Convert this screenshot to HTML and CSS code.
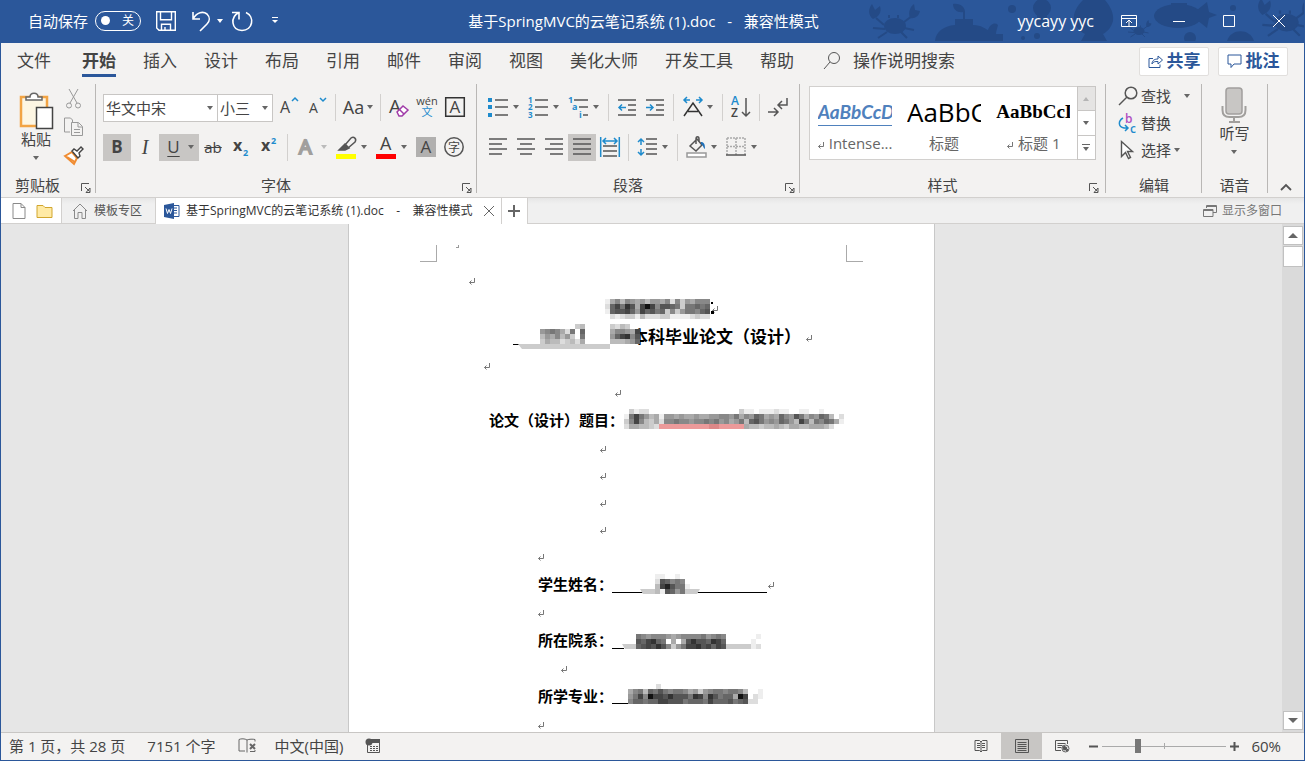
FILE: index.html
```html
<!DOCTYPE html>
<html lang="zh-CN">
<head>
<meta charset="utf-8">
<title>基于SpringMVC的云笔记系统 (1).doc - 兼容性模式</title>
<link rel="stylesheet" href="styles.css">
<script src="mosaic.js" defer></script>
</head>
<body>
<svg class="defs" aria-hidden="true">
  <symbol id="ret" viewBox="0 0 8 8"><path d="M6.5 1v4.500H1.500M3.500 3.500l-2 2 2 2"/></symbol>
  <symbol id="launch" viewBox="0 0 10 10"><path d="M.5 8V.5H8M4 4l4.500 4.500M9 5v4.500H5z"/></symbol>
</svg>
<div class="window">
  <header class="titlebar">
    <svg class="sea" viewBox="0 0 445 41" aria-hidden="true">
      <g id="crab"><ellipse cx="36" cy="26" rx="11" ry="8"/><path d="M25 25l-8-7M26 29l-12-1M28 32l-9 6M45 28l10 2M42 32l6 6M45 22l8-6M30 18v-3M39 18v-3" class="leg"/><path d="M14 19c-5-4-5-10-1-15l3 6 5-4c2 6-1 11-7 13zM51 18c-2-6 0-11 4-14l1 6 5 1c-1 5-5 8-10 7z"/></g>
      <path d="M76 41c1-9 8-15 20-16V19h8V12c-5 1-10-2-10-8 7-1 13 3 12 10v5h8v6c9 0 12 4 15 5 2-6 7-8 10-5-1 4-2 6-2 9h7v7z"/>
      <circle cx="153" cy="9" r="4"/><circle cx="183" cy="8" r="9"/><path d="M178 15h10v12h-10z"/><circle cx="164" cy="38" r="2"/><circle cx="178" cy="36" r="3"/>
      <path d="M224 0h22c6 7 9 14 8 21-2 7-6 11-10 13l4 7h-26l4-7c-6-3-10-8-11-14-1-7 3-14 9-20z"/>
      <g transform="translate(262 18) scale(.5)"><use href="#crab"/></g>
      <ellipse cx="319" cy="16" rx="24" ry="12"/><path d="M312 3h16v7h-16zM338 10l10-8 2 10 8 3-8 3-2 10-10-8z"/><circle cx="374" cy="8" r="3"/><circle cx="331" cy="38" r="6"/><path d="M368 41c4-13 23-13 27 0z"/>
      <g transform="translate(388 -6) scale(1.100)"><use href="#crab"/></g>
    </svg>
    <div class="quick">
      <label class="autosave">自动保存<input type="checkbox" class="sr"><span class="toggle"><i></i>关</span></label>
      <button aria-label="保存"><svg width="20" height="20"><path d="M.7.700h18.600v18.600H3L.7 17zM4.500.700v8h11v-8M5.500 19.300v-6h9v6M9 19v-3" stroke-width="1.400"/></svg></button>
      <button class="undo" aria-label="撤销"><svg width="20" height="22"><path d="M2 2v7h7M2 9C6 2 12 1 16 4c3 3 3 7 0 10l-7 7" stroke-width="1.600"/></svg><b class="caret"></b></button>
      <button aria-label="恢复"><svg width="22" height="22"><path d="M1 2.500h7v7M8 2.500C-1 7 0 20 11 20.500c11 0 13-14 4-18" stroke-width="1.600"/></svg></button>
      <button class="more" aria-label="自定义快速访问工具栏"><svg width="6" height="7"><path d="M0 .5h6"/><path class="solid" d="M0 3h6L3 6z"/></svg></button>
    </div>
    <h1>基于SpringMVC的云笔记系统 (1).doc&nbsp;&nbsp; -&nbsp;&nbsp; 兼容性模式</h1>
    <div class="controls">
      <span class="user">yycayy yyc</span>
      <button aria-label="功能区显示选项"><svg width="16" height="14"><path d="M.5 1.500h15v11H.5zM.5 4.500h15M8 12V6.500M5 9l3-3 3 3"/></svg></button>
      <button aria-label="最小化"><svg width="12" height="12"><path d="M0 6.500h12"/></svg></button>
      <button aria-label="最大化"><svg width="12" height="12"><path d="M.5.500h11v11H.5z"/></svg></button>
      <button aria-label="关闭"><svg width="12" height="12"><path d="M0 0l12 12M12 0L0 12"/></svg></button>
    </div>
  </header>

  <nav class="tabs">
    <button class="file">文件</button><button class="active">开始</button><button>插入</button><button>设计</button><button>布局</button><button>引用</button><button>邮件</button><button>审阅</button><button>视图</button><button>美化大师</button><button>开发工具</button><button>帮助</button>
    <button class="tell"><svg width="18" height="20"><circle cx="11" cy="7" r="5.500"/><path d="M7 11l-6 7"/></svg>操作说明搜索</button>
    <div class="actions">
      <button><svg width="15" height="14"><path d="M5 4.500H1v9h11v-3M4 10c0-4 3-5 6-5V2l4.500 4L10 10V7.500c-3 0-5 0-6 2.500z"/></svg>共享</button>
      <button><svg width="15" height="14"><path d="M1 1h13v9H7l-3 3.500V10H1z"/></svg>批注</button>
    </div>
  </nav>

  <section class="ribbon">
    <div class="group clip">
      <div class="clipbody">
        <button class="big" aria-label="粘贴">
          <svg width="36" height="38"><path d="M3 5h26v29H3z" fill="#fdf6e3" stroke="#f2a444" stroke-width="2.500"/><path d="M8 8V5h4c0-5 8-5 8 0h4v3z" fill="#fff" stroke="#666" stroke-width="1.500"/><path d="M18.500 15.500h16v21h-16z" fill="#fff" stroke="#444" stroke-width="1.500"/></svg>
          粘贴<b class="caret"></b></button>
        <div class="mini">
          <button aria-label="剪切"><svg width="20" height="22" class="dim"><path d="M5 1l8 14M14 1L6 15"/><circle cx="5" cy="17.500" r="2.500"/><circle cx="14" cy="17.500" r="2.500"/></svg></button>
          <button aria-label="复制"><svg width="22" height="20" class="dim"><path d="M7 15H1.500V1h6l2 2v2M8.500 5.500h7l4 4v9h-11zM15 6v4h4M11 12.500h6M11 15.500h6"/></svg></button>
          <button aria-label="格式刷"><svg width="22" height="20"><path d="M2 11l7-4 5 6-3 6z" fill="#fff" stroke="#f08c32" stroke-width="2"/><path d="M4 12l8 5" stroke="#f08c32" stroke-width="2"/><path d="M9 6l2-2 3 2 4-4 2 2-4 4 1 3-2 2z" fill="#fff" stroke="#444" stroke-width="1.400"/></svg></button>
        </div>
      </div>
      <footer><span>剪贴板</span><button class="launch" aria-label="剪贴板选项"><svg><use href="#launch"/></svg></button></footer>
    </div>

    <div class="group">
      <div class="rows">
        <div class="row">
          <span class="combo family"><select aria-label="字体"><option>华文中宋</option></select><b class="caret"></b></span><span class="combo size"><select aria-label="字号"><option>小三</option></select><b class="caret"></b></span>
          <span class="gap"></span>
          <button class="t" aria-label="增大字号"><svg width="20" height="20"><text x="1" y="16" font-size="16">A</text><path class="bl" d="M13 4l3-3 3 3"/></svg></button>
          <button class="t" aria-label="减小字号"><svg width="20" height="20"><text x="2" y="16" font-size="14">A</text><path class="bl" d="M13 1l3 3 3-3"/></svg></button>
          <hr>
          <button class="t case" aria-label="更改大小写"><span class="aa">Aa</span><b class="caret"></b></button>
          <hr>
          <button class="t" aria-label="清除所有格式"><svg width="22" height="22"><text x="1" y="17" font-size="19">A</text><path d="M9 16l6-6 5 4-6 6h-3z" fill="#fff" stroke="#a03ba8" stroke-width="1.500"/><path d="M11 13l5 5" stroke="#a03ba8"/></svg></button>
          <button class="t pinyin" aria-label="拼音指南"><span>wén</span><em>文</em></button>
          <button class="t" aria-label="字符边框"><svg width="20" height="20"><path d="M.7.700h18.600v18.600H.7z" stroke="#333"/><text x="4.500" y="16" font-size="17">A</text></svg></button>
        </div>
        <div class="row">
          <button class="t on bold" aria-label="加粗">B</button>
          <button class="t ital" aria-label="倾斜">I</button>
          <button class="t split on und" aria-label="下划线"><span>U</span><b class="caret"></b></button>
          <button class="t strike" aria-label="删除线">ab</button>
          <button class="t" aria-label="下标"><svg width="20" height="20"><text x="2" y="14" font-size="16" font-weight="700">x</text><text x="12" y="19" font-size="9" font-weight="700" class="blt">2</text></svg></button>
          <button class="t" aria-label="上标"><svg width="20" height="20"><text x="2" y="14" font-size="16" font-weight="700">x</text><text x="12" y="7" font-size="9" font-weight="700" class="blt">2</text></svg></button>
          <hr>
          <button class="t split faint" aria-label="文本效果"><svg width="22" height="22"><text x="3" y="18" font-size="20" class="outline">A</text></svg><b class="caret"></b></button>
          <button class="t split" aria-label="突出显示"><svg width="22" height="22"><path d="M0 18h20v5H0z" fill="#ff0" stroke="none"/><path d="M9 9l6-7c3-2 6 1 4 4l-7 6z"/><path class="solid" d="M9 8l4 4-4 2H3z"/></svg><b class="caret"></b></button>
          <button class="t split" aria-label="字体颜色"><svg width="22" height="22"><path d="M0 18h20v5H0z" fill="red" stroke="none"/><text x="4" y="14" font-size="18">A</text></svg><b class="caret"></b></button>
          <button class="t" aria-label="字符底纹"><svg width="20" height="20"><path d="M0 0h20v20H0z" fill="#b1b0af" stroke="none"/><text x="4.500" y="16" font-size="17">A</text></svg></button>
          <button class="t" aria-label="带圈字符"><svg width="20" height="20"><circle cx="10" cy="10" r="9.200"/><text x="4" y="15" font-size="12">字</text></svg></button>
        </div>
      </div>
      <footer><span>字体</span><button class="launch" aria-label="字体选项"><svg><use href="#launch"/></svg></button></footer>
    </div>

    <div class="group">
      <div class="rows">
        <div class="row">
          <button class="t split" aria-label="项目符号"><svg width="20" height="20"><path d="M0 1h4v4H0zM0 8h4v4H0zM0 16h4v4H0z" fill="#1e8bcd" stroke="none"/><path d="M7 3h13M7 10h13M7 18h13"/></svg><b class="caret"></b></button>
          <button class="t split" aria-label="编号"><svg width="20" height="22"><g class="blt" font-size="8" font-weight="700"><text x="0" y="7">1</text><text x="0" y="14">2</text><text x="0" y="22">3</text></g><path d="M7 4h13M7 11h13M7 19h13"/></svg><b class="caret"></b></button>
          <button class="t split" aria-label="多级列表"><svg width="20" height="22"><g class="blt" font-size="9" font-weight="700"><text x="0" y="7">1</text><text x="4" y="14">a</text><text x="11" y="22">i</text></g><path d="M6 4h14M11 11h9M15 19h5"/></svg><b class="caret"></b></button>
          <hr>
          <button class="t" aria-label="减少缩进量"><svg width="20" height="20"><path d="M1 3h18M11 8h8M11 13h8M1 18h18"/><path class="bl" d="M9 10.500H2M5 7.500l-3 3 3 3"/></svg></button>
          <button class="t" aria-label="增加缩进量"><svg width="20" height="20"><path d="M1 3h18M11 8h8M11 13h8M1 18h18"/><path class="bl" d="M1 10.500h7M5 7.500l3 3-3 3"/></svg></button>
          <hr>
          <button class="t split" aria-label="中文版式"><svg width="22" height="22"><path d="M2 20L11 7l9 13M6 15.500h10" stroke="#333"/><path class="bl" d="M8 4H2M5 1L2 4l3 3M14 4h6M17 1l3 3-3 3"/></svg><b class="caret"></b></button>
          <hr>
          <button class="t" aria-label="排序"><svg width="22" height="22"><text x="1" y="9" font-size="12" font-weight="600" class="blt">A</text><text x="1" y="21" font-size="12" font-weight="600">Z</text><path d="M16 2v18M12 16l4 4 4-4"/></svg></button>
          <hr>
          <button class="t" aria-label="显示编辑标记"><svg width="22" height="22"><path d="M20 2v7h-8M15 5l-4 4 4 4M1 16h9M7 12l4 4-4 4"/></svg></button>
        </div>
        <div class="row">
          <button class="t" aria-label="左对齐"><svg width="20" height="20"><path d="M1 2h18M1 7h13M1 12h18M1 17h13"/></svg></button>
          <button class="t" aria-label="居中"><svg width="20" height="20"><path d="M1 2h18M4 7h12M1 12h18M4 17h12"/></svg></button>
          <button class="t" aria-label="右对齐"><svg width="20" height="20"><path d="M1 2h18M6 7h13M1 12h18M6 17h13"/></svg></button>
          <button class="t on" aria-label="两端对齐"><svg width="20" height="20"><path d="M1 2h18M1 7h18M1 12h18M1 17h18"/></svg></button>
          <button class="t" aria-label="分散对齐"><svg width="20" height="20"><path class="bl" d="M.7 0v20M19.300 0v20M3 4h14M6 1L3 4l3 3M14 1l3 3-3 3"/><path d="M3 9h14M3 14h14M3 19h14"/></svg></button>
          <hr>
          <button class="t split" aria-label="行和段落间距"><svg width="20" height="20"><path class="bl" d="M4 2v6M1 5l3-3 3 3M4 12v6M1 15l3 3 3-3"/><path d="M9 2h11M9 7h11M9 12h11M9 17h11"/></svg><b class="caret"></b></button>
          <hr>
          <button class="t split" aria-label="底纹"><svg width="22" height="22"><path d="M1 17h19v4H1z" fill="#fff" stroke="#999"/><path d="M4 10l7-7 5 6-6 6zM10 8V3c0-3 3-3 3 0v3"/><path d="M15 6c3 0 4 2 4 7-2-1-1-3-4-5z" fill="#1e6fb8" stroke="none"/></svg><b class="caret"></b></button>
          <button class="t split" aria-label="边框"><svg width="20" height="20"><path d="M1 1h18v17M1 1v17M10 1v17M1 9.500h18" stroke="#aaa" stroke-dasharray="2 1"/><path d="M0 18h20"/></svg><b class="caret"></b></button>
        </div>
      </div>
      <footer><span>段落</span><button class="launch" aria-label="段落选项"><svg><use href="#launch"/></svg></button></footer>
    </div>

    <div class="group styles">
      <div class="gallery">
        <button class="style"><span class="sample intense">AaBbCcDd</span><span><svg class="ret"><use href="#ret"/></svg> Intense...</span></button>
        <button class="style"><span class="sample title">AaBbCc</span><span>标题</span></button>
        <button class="style"><span class="sample h1">AaBbCcDd</span><span><svg class="ret"><use href="#ret"/></svg> 标题 1</span></button>
        <div class="scroller"><button disabled aria-label="上一行"><b class="caret up"></b></button><button aria-label="下一行"><b class="caret"></b></button><button aria-label="其他"><i></i><b class="caret"></b></button></div>
      </div>
      <footer><span>样式</span><button class="launch" aria-label="样式选项"><svg><use href="#launch"/></svg></button></footer>
    </div>

    <div class="group edit">
      <div class="list">
        <button><svg width="20" height="20"><circle cx="13" cy="7" r="5.800" stroke-width="1.500"/><path d="M9 11l-8 8" stroke-width="1.500"/></svg>查找<b class="caret far"></b></button>
        <button><svg width="20" height="20"><text x="7" y="10" font-size="12" font-weight="600" class="purple">b</text><text x="12" y="20" font-size="12" font-weight="600" class="blt">c</text><path class="bl" d="M5 5c-5 3-5 9 1 10h4M7 12l3 3-3 3"/></svg>替换</button>
        <button><svg width="20" height="20"><path d="M3.500 1.500v15l4-4 3 6 2-1-3-6h5z" stroke-width="1.400" fill="#fff"/></svg>选择<b class="caret"></b></button>
      </div>
      <footer><span>编辑</span></footer>
    </div>

    <div class="group voice">
      <button class="big"><svg width="26" height="38"><rect x="5" y="2" width="16" height="26" rx="3" fill="#c8c6c4" stroke="#a19f9d" stroke-width="1.500"/><path d="M1.500 20v4c0 5 3 7 7 7h9c4 0 7-2 7-7v-4M13 31v5M8 36h11" stroke="#a19f9d" stroke-width="2"/></svg>听写<b class="caret"></b></button>
      <footer><span>语音</span></footer>
    </div>
    <button class="collapse" aria-label="折叠功能区"><svg width="12" height="8"><path d="M1 7l5-5 5 5" stroke-width="1.800"/></svg></button>
  </section>

  <nav class="doctabs">
    <div class="cell white icons">
      <button aria-label="新建"><svg width="14" height="16"><path d="M1 .500h8l4 4v11H1zM9 .500v4h4" fill="#fff" stroke="#8a8a8a"/></svg></button>
      <button aria-label="打开"><svg width="17" height="14"><path d="M1 1.500h6l2 2h7v10H1z" fill="#ffeaa5" stroke="#d1a62e"/></svg></button>
    </div>
    <button class="cell home"><svg width="16" height="16"><path d="M1 8l7-7 7 7M2.500 7v8.500h3.500v-6h4v6h3.500V7" stroke="#8a8a8a"/></svg>模板专区</button>
    <div class="cell white current">
      <svg width="16" height="16"><path d="M9 2.500h6v11H9M10 5h3M10 7.500h3M10 10h3" stroke="#2b579a"/><path d="M0 2l10-2v16L0 14z" fill="#2b579a" stroke="none"/><path d="M2 5.500l1.500 5L5 6.500l1.500 4 1.500-5" stroke="#fff"/></svg>
      <span>基于SpringMVC的云笔记系统 (1).doc&nbsp;&nbsp;&nbsp; -&nbsp;&nbsp;&nbsp; 兼容性模式</span>
      <button aria-label="关闭标签"><svg width="12" height="12"><path d="M1 1l10 10M11 1L1 11" stroke="#666"/></svg></button>
    </div>
    <button class="cell white plus" aria-label="新建标签"><svg width="12" height="12"><path d="M6 0v12M0 6h12" stroke="#666" stroke-width="2"/></svg></button>
    <button class="multi"><svg width="14" height="12"><path d="M3.500 3V.500h10v7H10M.5 4.500H10v7H.5zM.5 5.500H10M3.500 1.500h10" stroke="#777"/></svg>显示多窗口</button>
  </nav>

  <main class="workspace">
    <div class="canvas">
      <article class="page">
        <div class="margins"><i class="corner"></i><span class="dot"></span><i class="corner right"></i></div>
        <p class="b i119"><svg class="ret"><use href="#ret"/></svg></p>
        <p class="t i256"><svg class="mosaic" width="106" height="29" data-x="0" data-y="5" data-rows="ea8b89a9b99a8d8c9a888 d64735a41485567c77676 e65546946576c8c977865 fdedccebdddcceeeedcdd"><path d="M106 8h2v2h-2zM106 17h3v3h-3z" fill="#000"/></svg><svg class="ret"><use href="#ret"/></svg></p>
        <p class="t i164 heading"><svg class="mosaic" width="118" height="29" data-x="27" data-y="1" data-rows="fffffffcbfffffcdbcff 9878ad7f6fffffa889a4 b9a8b9cf7fffff964385 cabbdcbdafffffbbba96"><path d="M0 21h6v1H0z" fill="#000"/><path d="M5 21h92v5H9z" fill="#ccc"/></svg><span>本科毕业论文（设计）</span><svg class="ret"><use href="#ret"/></svg></p>
        <p class="b i134"><svg class="ret"><use href="#ret"/></svg></p>
        <p class="b i265"><svg class="ret"><use href="#ret"/></svg></p>
        <p class="t i140 label"><span>论文（设计）题目：</span><svg class="mosaic" width="218" height="29" data-x="0" data-y="3" data-rows="fceddffffffffffffffffffceefeeedeeffeeffeffff e7479bae99a9aa9aa998897a8967a9a68957a8967bfd c848bcad8878898878798a97b657989679b47b7867ae daabbcdppppppppppqqpppppabbcbbabcaabbaaabdff"></svg></p>
        <p class="b i250"><svg class="ret"><use href="#ret"/></svg></p>
        <p class="b i250"><svg class="ret"><use href="#ret"/></svg></p>
        <p class="b i250"><svg class="ret"><use href="#ret"/></svg></p>
        <p class="b i250"><svg class="ret"><use href="#ret"/></svg></p>
        <p class="b i188"><svg class="ret"><use href="#ret"/></svg></p>
        <p class="t i189 label"><span>学生姓名：</span><svg class="mosaic" width="154" height="29" data-x="42" data-y="4" data-rows="eeffeff d56878f b42577e be5697c"><path d="M-1 22h155v1H-1z" fill="#000"/><path d="M27 19h60l-3 5H30z" fill="#ccc"/></svg><svg class="ret"><use href="#ret"/></svg></p>
        <p class="b i188"><svg class="ret"><use href="#ret"/></svg></p>
        <p class="t i189 label"><span>所在院系：</span><svg class="mosaic" width="150" height="29" data-x="23" data-y="8" data-rows="7898889a9888879878ffffffe 564367fafa53556346fffffef 6545358c9744354645ccccced"><path d="M-1 22h12v1H-1z" fill="#000"/><path d="M9 18h128v5H12z" fill="#ccc"/></svg></p>
        <p class="b i211"><svg class="ret"><use href="#ret"/></svg></p>
        <p class="t i189 label"><span>所学专业：</span><svg class="mosaic" width="150" height="29" data-x="15" data-y="7" data-rows="a87b67578778a9c98778778bffe 974814453555734835766a14fde 866766445557666746665765ddf"><path d="M-1 21h17v1H-1z" fill="#000"/><path d="M43 2h5v5h-5z" fill="#ddd"/></svg></p>
        <p class="b i188"><svg class="ret"><use href="#ret"/></svg></p>
      </article>
    </div>
    <div class="vscroll"><button aria-label="向上滚动"><b class="caret up"></b></button><div class="thumb"></div><button class="down" aria-label="向下滚动"><b class="caret"></b></button></div>
  </main>

  <footer class="status">
    <button class="pages">第 1 页，共 28 页</button>
    <button class="words">7151 个字</button>
    <button aria-label="校对"><svg width="19" height="16"><path d="M9 14.500V2C7 .500 3 .500 1 1.500V13h6M9 2c2-1 6-1 8-.500v2M17 12v1.500h-5" stroke="#666"/><path d="M12 6l5 5M17 6l-5 5" stroke="#666" stroke-width="2"/></svg></button>
    <button class="lang">中文(中国)</button>
    <button aria-label="宏录制"><svg width="16" height="16"><path d="M2.500 6v8.500h12V2H6" stroke="#555"/><path d="M6 1h9v4H6z" fill="#555" stroke="none"/><circle cx="4" cy="4" r="3.500" fill="#555" stroke="none"/><path d="M5 8.500h8M5 10.500h8M5 12.500h8" stroke="#555" stroke-dasharray="2 1"/></svg></button>
    <div class="views">
      <button aria-label="阅读视图"><svg width="14" height="14"><path d="M7 2v11M1 1.500h4.500L7 3l1.500-1.500H13v10H8.500L7 13l-1.500-1.500H1zM3 4.500h3M3 6.500h3M3 8.500h3M8 4.500h3M8 6.500h3M8 8.500h3"/></svg></button>
      <button class="on" aria-label="页面视图"><svg width="14" height="14"><path d="M.5.500h13v13H.5zM2.500 3.500h9M2.500 5.500h9M2.500 7.500h9M2.500 9.500h9M2.500 11.500h9"/></svg></button>
      <button aria-label="Web 版式视图"><svg width="15" height="14"><path d="M6 11.500H.5v-10h12V5M2.500 4.500h8M2.500 6.500h5M2.500 8.500h4"/><circle cx="10.500" cy="9.500" r="3.500" stroke="#666" fill="#ddd"/><path d="M9 7l3 2-2 2-2-1zM12 10l1 1-2 1z" fill="#555"/></svg></button>
    </div>
    <div class="zoom"><button aria-label="缩小"><svg width="9" height="9"><path d="M0 4.500h9" stroke-width="2"/></svg></button><span class="slide"><input type="range" min="0" max="100" value="28" aria-label="显示比例"></span><button aria-label="放大"><svg width="9" height="9"><path d="M0 4.500h9M4.500 0v9" stroke-width="2"/></svg></button><button class="pct">60%</button></div>
  </footer>
</div>
</body>
</html>
```

FILE: mosaic.js
```js
// Fills each .mosaic with 5px cells; a hex digit is a grey level, p and q are the two pinks.
const NS = "http://www.w3.org/2000/svg";
document.querySelectorAll(".mosaic").forEach((svg) => {
  const x0 = Number(svg.dataset.x);
  const y0 = Number(svg.dataset.y);
  svg.dataset.rows.split(" ").forEach((row, r) => {
    [...row].forEach((c, i) => {
      if (c === "f") return;
      const rect = document.createElementNS(NS, "rect");
      rect.setAttribute("x", x0 + i * 5);
      rect.setAttribute("y", y0 + r * 5);
      rect.setAttribute("width", 5);
      rect.setAttribute("height", 5);
      rect.setAttribute("fill", c === "p" ? "#ec9a9a" : c === "q" ? "#d88" : "#" + c + c + c);
      svg.appendChild(rect);
    });
  });
});
```

FILE: styles.css
```css
* { box-sizing: border-box; }
body { margin: 0; font: 15px/20px "Open Sans", "Noto Sans CJK SC", sans-serif; color: #444; }
button, select, input { font: inherit; color: inherit; margin: 0; padding: 0; border: 0; background: none; }
button { display: flex; align-items: center; justify-content: center; white-space: nowrap; }
p, h1 { margin: 0; }
svg { flex: none; fill: none; stroke: #555; overflow: visible; }
svg text { fill: #444; stroke: none; }
svg .blt, svg .blt text { fill: #1e8bcd; }
svg .purple { fill: #b04fc0; }
svg .bl { stroke: #1e8bcd; stroke-width: 1.5; }
svg .solid { fill: #555; }
.row svg { stroke-width: 1.5; }
.defs { position: absolute; width: 0; height: 0; }
.sr { position: absolute; opacity: 0; }
.caret { width: 0; height: 0; flex: none; border: 3px solid transparent; border-top: 4px solid #666; border-bottom: 0; }
.caret.up { border-top: 0; border-bottom: 4px solid #666; }
.window { height: 100vh; min-height: 400px; display: flex; flex-direction: column; border: 1px solid #2b579a; border-top: 0; background: #f3f2f1; overflow: hidden; }

.titlebar { position: relative; flex: none; height: 43px; display: flex; align-items: center; background: #2b579a; color: #fff; padding-bottom: 2px; }
.titlebar svg { stroke: #fff; }
.titlebar .caret { border-top-color: #fff; }
.titlebar svg .solid { fill: #fff; stroke: none; }
.titlebar .sea { position: absolute; right: 0; top: 0; width: 445px; height: 41px; overflow: hidden; fill: #244a86; stroke: none; }
.sea .leg { stroke: #244a86; stroke-width: 2; fill: none; }
.quick, .controls { position: relative; flex: 1; display: flex; align-items: center; }
.quick { padding-left: 27px; gap: 15px; }
.autosave { display: flex; align-items: center; gap: 7px; }
.toggle { width: 46px; height: 20px; border: 1px solid #fff; border-radius: 10px; display: flex; align-items: center; justify-content: space-between; padding: 0 6px 0 5px; font-size: 12px; }
.toggle i { width: 9px; height: 9px; border-radius: 50%; background: #fff; }
.undo { gap: 6px; }
.quick .undo { margin-right: -7px; }
.more { margin-left: 4px; }
.titlebar h1 { font-size: 15px; font-weight: 400; white-space: nowrap; }
.controls { justify-content: flex-end; padding-left: 45px; }
.controls button { width: 50px; height: 41px; }
.user { font-size: 16px; margin-right: 10px; }

.tabs { flex: none; height: 37px; display: flex; gap: 1px; padding: 0 16px 0 3px; font-size: 17px; }
.tabs > button { position: relative; padding: 0 13px; height: 36px; }
.tabs > .file { margin-right: 4px; }
.tabs > .active { font-weight: 700; }
.tabs > .active::after { content: ""; position: absolute; left: 13px; right: 13px; bottom: 2px; height: 3px; background: #2b579a; }
.tabs > .tell { gap: 12px; margin-left: 2px; }
.actions { margin-left: auto; display: flex; gap: 9px; padding-top: 4px; }
.actions button { height: 29px; width: 70px; gap: 4px; background: #fff; border: 1px solid #e1dfdd; border-radius: 2px; color: #2b579a; font-weight: 700; padding-bottom: 2px; }
.actions svg { stroke: #2b579a; }

.ribbon { flex: none; height: 118px; display: flex; border-bottom: 1px solid #d2d0ce; padding-top: 4px; }
.group { position: relative; display: flex; flex-direction: column; justify-content: space-between; padding: 0 8px 0 7px; height: 112px; }
.group::after { content: ""; position: absolute; right: 0; top: 0; height: 109px; width: 1px; background: #b9b7b5; }
.group footer { display: flex; justify-content: center; height: 22px; line-height: 22px; position: relative; padding-right: 20px; }
.launch { position: absolute; right: -4px; bottom: 2px; width: 12px; height: 12px; }
.launch svg { width: 10px; height: 10px; }
.clip { width: 95px; }
.group.clip footer { justify-content: flex-start; padding: 0 0 0 7px; }
.clipbody { display: flex; justify-content: space-between; }
.big { flex-direction: column; line-height: 18px; padding: 2px 0 0 10px; }
.big .caret { margin-top: 8px; }
.mini { display: flex; flex-direction: column; gap: 6px; padding-top: 4px; }
.mini button { height: 22px; width: 28px; }
svg.dim { stroke: #999; }
.rows { padding-top: 10px; display: flex; flex-direction: column; gap: 13px; }
.row { display: flex; height: 27px; }
.row hr { width: 1px; height: 27px; margin: 0 4px; border: 0; background: #d2d0ce; }
.t { width: 28px; height: 27px; flex: none; padding-bottom: 1px; }
.split { width: 40px; }
.split > :first-child { width: 22px; margin: 0 3px; text-align: center; }
.split .caret { margin-right: 5px; }
.on { background: #c8c6c4; }
.combo { position: relative; display: flex; align-items: center; border: 1px solid #c8c6c4; background: #fff; height: 28px; }
.combo select { appearance: none; width: 100%; height: 26px; padding-left: 2px; }
.combo .caret { position: absolute; right: 4px; pointer-events: none; }
.family { width: 115px; }
.size { width: 56px; margin-left: -1px; }
.gap { width: 2px; }
.case { width: 36px; gap: 3px; }
.aa { font-size: 18px; }
.pinyin { flex-direction: column; font-size: 11px; line-height: 10px; }
.pinyin em { font-style: normal; color: #1e8bcd; line-height: 12px; }
.bold { font-weight: 700; font-size: 17px; }
.ital { font: italic 20px "Liberation Serif", serif; }
.und { font-size: 17px; }
.und span { text-decoration: underline; text-underline-offset: 3px; }
.strike { text-decoration: line-through; }
.faint .caret { border-top-color: #bbb; }
svg text.outline { fill: #ddd; stroke: #a19f9d; stroke-width: 2px; }

.styles { flex: 1; padding: 2px 10px 0 9px; }
.gallery { display: flex; height: 74px; border: 1px solid #d2d0ce; background: #fff; }
.style { flex: 1; flex-direction: column; gap: 4px; color: #666; padding-top: 2px; min-width: 0; }
.sample { width: 74px; height: 34px; line-height: 34px; overflow: hidden; color: #000; text-align: left; }
.intense { font: italic 700 19px/26px Lato, sans-serif; color: #4f81bd; border-bottom: 1px solid #4f81bd; height: 27px; margin: 4px 0 3px; }
.title { font-size: 26px; }
.h1 { font: 700 19px/34px "Liberation Serif", serif; }
.scroller { width: 19px; margin: -1px; display: flex; flex-direction: column; border: 1px solid #c8c6c4; }
.scroller button { flex: 1; flex-direction: column; gap: 2px; border-bottom: 1px solid #c8c6c4; }
.scroller button:disabled { background: #e5e4e3; }
.scroller button:last-child { border-bottom: 0; }
.scroller :disabled .caret { border-bottom-color: #b5b5b5; }
.scroller i { width: 8px; height: 1px; background: #666; }
.ret { width: 8px; height: 8px; stroke: #777; }
.styles + .edit { width: 96px; padding-left: 8px; }
.list { display: flex; flex-direction: column; align-items: flex-start; padding-left: 4px; }
.list button { height: 27px; gap: 3px; padding-bottom: 3px; }
.list .far { margin-left: 10px; }
.group.edit footer, .group.voice footer { padding: 0; }
.voice { width: 66px; align-items: center; }
.voice .big { padding-left: 0; }
.collapse { width: 36px; align-self: flex-end; height: 20px; }

.doctabs { flex: none; height: 26px; display: flex; background: linear-gradient(#e6e6e6, #f0f0f0 6px); border-bottom: 1px solid #d2d0ce; font-size: 12px; color: #555; }
.cell { display: flex; align-items: center; height: 25px; border-right: 1px solid #d2d0ce; padding: 0 8px; gap: 6px; white-space: nowrap; }
.white { background: #fff; }
.current, .plus { height: 26px; }
.current { color: #333; padding-right: 6px; }
.icons { gap: 10px; padding: 0 8px 0 11px; }
.home { padding: 0 13px 0 10px; }
.current button { margin-left: 4px; }
.plus { width: 26px; padding: 0; }
.multi { margin-left: auto; margin-right: 22px; gap: 5px; color: #777; }

.workspace { flex: 1; min-height: 0; display: flex; background: #e6e6e6; }
.canvas { flex: 1; display: flex; justify-content: center; overflow: hidden; }
.page { width: 587px; background: #fff; border: 1px solid #c8c8c8; border-width: 0 1px; overflow: hidden; color: #000; }
.margins { height: 43px; padding: 21px 71px 0; display: flex; }
.corner { width: 17px; height: 17px; border: solid #aaa; border-width: 0 1px 1px 0; }
.corner.right { margin-left: auto; border-width: 0 0 1px 1px; }
.dot { width: 3px; height: 3px; border: solid #999; border-width: 0 1px 1px 0; margin-left: 19px; }
.page p { display: flex; align-items: center; font-weight: 700; font-family: "Liberation Serif", "Noto Sans CJK SC", serif; white-space: nowrap; }
.b { height: 27px; }
.t.label, .t.heading, .t.i256 { width: auto; height: 29px; padding-bottom: 0; }
.heading { font-size: 17px; }
.heading .ret { margin-left: 4px; }
.mosaic { position: relative; stroke: none; }
.i119 { padding-left: 119px; }
.i134 { padding-left: 134px; }
.i140 { padding-left: 140px; }
.i164 { padding-left: 164px; }
.i188 { padding-left: 188px; }
.i189 { padding-left: 189px; }
.i211 { padding-left: 211px; }
.i250 { padding-left: 250px; }
.i256 { padding-left: 256px; }
.i265 { padding-left: 265px; }
.vscroll { width: 22px; background: #dadada; display: flex; flex-direction: column; padding: 2px 1px; gap: 1px; }
.vscroll button, .thumb { height: 19px; background: #fff; border: 1px solid #c1c1c1; }
.thumb { height: 21px; }
.vscroll .down { margin-top: auto; }
.vscroll .caret { border-width: 5px; border-bottom-width: 0; }
.vscroll .caret.up { border-top-width: 0; border-bottom-width: 5px; }

.status { flex: none; height: 28px; display: flex; align-items: stretch; border-top: 1px solid #c8c6c4; padding: 0 23px 1px 8px; }
.status button { height: 26px; }
.words { margin: 0 22px; }
.status .lang { margin: 0 22px 0 18px; }
.views { display: flex; margin-left: auto; }
.views button { width: 41px; }
.zoom { display: flex; align-items: center; margin-left: 6px; }
.slide { width: 124px; margin: 0 4px; display: flex; align-items: center; background: linear-gradient(#aaa, #aaa) 50% 50% / 1px 6px no-repeat; height: 26px; }
.slide input { appearance: none; width: 100%; height: 26px; background: linear-gradient(#aaa, #aaa) 50% 50% / 100% 1px no-repeat; }
.slide input::-webkit-slider-thumb { appearance: none; width: 6px; height: 14px; background: #777; }
.zoom .pct { margin-left: 12px; }
```
